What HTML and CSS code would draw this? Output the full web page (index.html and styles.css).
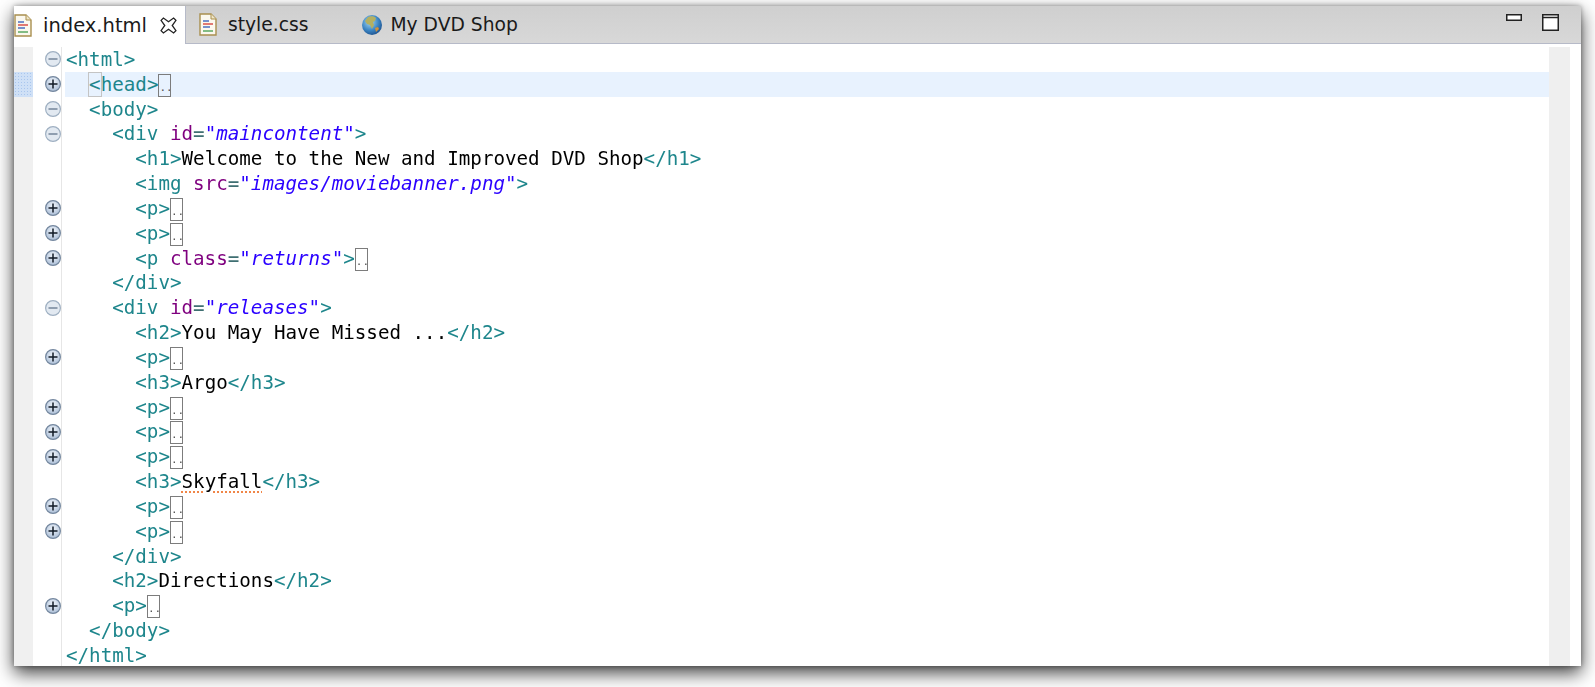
FILE: index.html
```html
<!DOCTYPE html>
<html lang="en">
<head>
<meta charset="utf-8">
<title>index.html</title>
<link rel="stylesheet" href="styles.css">
</head>
<body>
<svg class="defs" width="0" height="0" aria-hidden="true">
  <defs>
    <radialGradient id="knob" cx="50%" cy="35%" r="70%">
      <stop offset="0" stop-color="#f0f5fb"/>
      <stop offset="1" stop-color="#a6bad4"/>
    </radialGradient>
    <radialGradient id="earth" cx="40%" cy="35%" r="70%">
      <stop offset="0" stop-color="#a8d8f0"/>
      <stop offset="0.6" stop-color="#3c86c4"/>
      <stop offset="1" stop-color="#1c4f8c"/>
    </radialGradient>
    <symbol id="plus" viewBox="0 0 16 16">
      <circle cx="8" cy="8" r="7.400" fill="url(#knob)" stroke="#75889f" stroke-width="1.200"/>
      <path d="M3.500 8h9M8 3.500v9" stroke="#101a26" stroke-width="1.500"/>
    </symbol>
    <symbol id="minus" viewBox="0 0 16 16">
      <circle cx="8" cy="8" r="7.400" fill="#e2e9f1" stroke="#9fb0c2" stroke-width="1.200"/>
      <path d="M3.500 8h9" stroke="#73849a" stroke-width="1.500"/>
    </symbol>
    <symbol id="doc" viewBox="0 0 18 23">
      <path d="M1 1h11l5 5v16H1z" fill="#fbf8ee" stroke="#a98f4f" stroke-width="1.400"/>
      <path d="M12 1v5h5" fill="#efe6c8" stroke="#a98f4f"/>
      <path d="M4 8h6" stroke="#4a6fc0" stroke-width="1.500"/>
      <path d="M4 11h10" stroke="#d8504a" stroke-width="1.500"/>
      <path d="M4 14h7" stroke="#4a6fc0" stroke-width="1.500"/>
      <path d="M4 18h10" stroke="#5aa860" stroke-width="1.500"/>
    </symbol>
  </defs>
</svg>
<main class="window">
  <header class="tabbar">
    <div class="tab tab-active">
      <svg class="doc-icon"><use href="#doc"/></svg>
      <span class="tab-label">index.html</span>
      <svg class="close-icon" viewBox="0 0 16 16"><path d="M1 3.200 3.200 1 8 4.500 12.800 1 15 3.200 11.500 8 15 12.800 12.800 15 8 11.500 3.200 15 1 12.800 4.500 8z" fill="#fff" stroke="#222" stroke-width="1.200"/></svg>
    </div>
    <div class="tab tab-style">
      <svg class="doc-icon"><use href="#doc"/></svg>
      <span class="tab-label">style.css</span>
    </div>
    <div class="tab tab-shop">
      <svg class="globe-icon" viewBox="0 0 22 22">
        <circle cx="11" cy="11" r="10" fill="url(#earth)"/>
        <path d="M7 3c3-1 6-1 8 1l-1 3-2 1 1 3-2 4-2-4-3-1-2-3z" fill="#b4b060"/>
        <path d="M14 14l3-1 1 2-3 3z" fill="#d09038"/>
      </svg>
      <span class="tab-label">My DVD Shop</span>
    </div>
    <div class="controls">
      <svg class="min-icon" viewBox="0 0 16 7"><rect x="0.750" y="0.750" width="14.500" height="5.500" fill="#fff" stroke="#222" stroke-width="1.500"/></svg>
      <svg class="max-icon" viewBox="0 0 17 17"><rect x="0.750" y="0.750" width="15.500" height="15.500" fill="#fff" stroke="#222" stroke-width="1.500"/><path d="M1 3.500h15" stroke="#222" stroke-width="1.500"/></svg>
    </div>
  </header>
  <section class="editor">
    <div class="row"><div class="mark"></div><div class="fold"><svg class="knob"><use href="#minus"/></svg></div><div class="code"><span class="t">&lt;html&gt;</span></div><div class="rail"></div></div>
    <div class="row row-current"><div class="mark"></div><div class="fold"><svg class="knob"><use href="#plus"/></svg></div><div class="code">  <span class="t"><span class="match">&lt;</span>head&gt;</span><span class="more">..</span></div><div class="rail"></div></div>
    <div class="row"><div class="mark"></div><div class="fold"><svg class="knob"><use href="#minus"/></svg></div><div class="code">  <span class="t">&lt;body&gt;</span></div><div class="rail"></div></div>
    <div class="row"><div class="mark"></div><div class="fold"><svg class="knob"><use href="#minus"/></svg></div><div class="code">    <span class="t">&lt;div </span><span class="a">id</span><span class="e">=</span><span class="v">"maincontent"</span><span class="t">&gt;</span></div><div class="rail"></div></div>
    <div class="row"><div class="mark"></div><div class="fold"></div><div class="code">      <span class="t">&lt;h1&gt;</span>Welcome to the New and Improved DVD Shop<span class="t">&lt;/h1&gt;</span></div><div class="rail"></div></div>
    <div class="row"><div class="mark"></div><div class="fold"></div><div class="code">      <span class="t">&lt;img </span><span class="a">src</span><span class="e">=</span><span class="v">"images/moviebanner.png"</span><span class="t">&gt;</span></div><div class="rail"></div></div>
    <div class="row"><div class="mark"></div><div class="fold"><svg class="knob"><use href="#plus"/></svg></div><div class="code">      <span class="t">&lt;p&gt;</span><span class="more">..</span></div><div class="rail"></div></div>
    <div class="row"><div class="mark"></div><div class="fold"><svg class="knob"><use href="#plus"/></svg></div><div class="code">      <span class="t">&lt;p&gt;</span><span class="more">..</span></div><div class="rail"></div></div>
    <div class="row"><div class="mark"></div><div class="fold"><svg class="knob"><use href="#plus"/></svg></div><div class="code">      <span class="t">&lt;p </span><span class="a">class</span><span class="e">=</span><span class="v">"returns"</span><span class="t">&gt;</span><span class="more">..</span></div><div class="rail"></div></div>
    <div class="row"><div class="mark"></div><div class="fold"></div><div class="code">    <span class="t">&lt;/div&gt;</span></div><div class="rail"></div></div>
    <div class="row"><div class="mark"></div><div class="fold"><svg class="knob"><use href="#minus"/></svg></div><div class="code">    <span class="t">&lt;div </span><span class="a">id</span><span class="e">=</span><span class="v">"releases"</span><span class="t">&gt;</span></div><div class="rail"></div></div>
    <div class="row"><div class="mark"></div><div class="fold"></div><div class="code">      <span class="t">&lt;h2&gt;</span>You May Have Missed ...<span class="t">&lt;/h2&gt;</span></div><div class="rail"></div></div>
    <div class="row"><div class="mark"></div><div class="fold"><svg class="knob"><use href="#plus"/></svg></div><div class="code">      <span class="t">&lt;p&gt;</span><span class="more">..</span></div><div class="rail"></div></div>
    <div class="row"><div class="mark"></div><div class="fold"></div><div class="code">      <span class="t">&lt;h3&gt;</span>Argo<span class="t">&lt;/h3&gt;</span></div><div class="rail"></div></div>
    <div class="row"><div class="mark"></div><div class="fold"><svg class="knob"><use href="#plus"/></svg></div><div class="code">      <span class="t">&lt;p&gt;</span><span class="more">..</span></div><div class="rail"></div></div>
    <div class="row"><div class="mark"></div><div class="fold"><svg class="knob"><use href="#plus"/></svg></div><div class="code">      <span class="t">&lt;p&gt;</span><span class="more">..</span></div><div class="rail"></div></div>
    <div class="row"><div class="mark"></div><div class="fold"><svg class="knob"><use href="#plus"/></svg></div><div class="code">      <span class="t">&lt;p&gt;</span><span class="more">..</span></div><div class="rail"></div></div>
    <div class="row"><div class="mark"></div><div class="fold"></div><div class="code">      <span class="t">&lt;h3&gt;</span><span class="spell">Skyfall</span><span class="t">&lt;/h3&gt;</span></div><div class="rail"></div></div>
    <div class="row"><div class="mark"></div><div class="fold"><svg class="knob"><use href="#plus"/></svg></div><div class="code">      <span class="t">&lt;p&gt;</span><span class="more">..</span></div><div class="rail"></div></div>
    <div class="row"><div class="mark"></div><div class="fold"><svg class="knob"><use href="#plus"/></svg></div><div class="code">      <span class="t">&lt;p&gt;</span><span class="more">..</span></div><div class="rail"></div></div>
    <div class="row"><div class="mark"></div><div class="fold"></div><div class="code">    <span class="t">&lt;/div&gt;</span></div><div class="rail"></div></div>
    <div class="row"><div class="mark"></div><div class="fold"></div><div class="code">    <span class="t">&lt;h2&gt;</span>Directions<span class="t">&lt;/h2&gt;</span></div><div class="rail"></div></div>
    <div class="row"><div class="mark"></div><div class="fold"><svg class="knob"><use href="#plus"/></svg></div><div class="code">    <span class="t">&lt;p&gt;</span><span class="more">..</span></div><div class="rail"></div></div>
    <div class="row"><div class="mark"></div><div class="fold"></div><div class="code">  <span class="t">&lt;/body&gt;</span></div><div class="rail"></div></div>
    <div class="row"><div class="mark"></div><div class="fold"></div><div class="code"><span class="t">&lt;/html&gt;</span></div><div class="rail"></div></div>
  </section>
</main>
</body>
</html>
```
FILE: styles.css
```css
html, body {
  margin: 0;
  height: 100%;
  background: #fff;
  overflow: hidden;
}

body {
  padding: 6px 14px 0;
  box-sizing: border-box;
}

.defs {
  display: block;
  height: 0;
}

.window {
  height: 660px;
  display: flex;
  flex-direction: column;
  background: #fff;
  overflow: hidden;
  box-shadow: 0 7px 17px rgba(0, 0, 0, 0.75), 0 0 5px rgba(0, 0, 0, 0.35);
  filter: blur(0.55px);
}

.tabbar {
  flex: none;
  height: 37px;
  display: flex;
  align-items: stretch;
  background: linear-gradient(#cfcfcf, #d8d8d8);
  border-bottom: 1px solid #b6bac8;
}

.tab {
  display: flex;
  align-items: center;
  font: 18.700px "DejaVu Sans", sans-serif;
  color: #1a1a1a;
}

.tab-active {
  width: 172px;
  font-size: 19.500px;
  background: #fff;
  margin-bottom: -1px;
  border-right: 1px solid #b6bac8;
  box-sizing: border-box;
}

.tab-style {
  margin-left: 13px;
}

.tab-shop {
  margin-left: 52px;
}

.doc-icon {
  width: 18px;
  height: 23px;
  margin-right: 11px;
}

.close-icon {
  width: 17px;
  height: 17px;
  margin-left: 13px;
}

.globe-icon {
  width: 22px;
  height: 22px;
  margin-right: 8px;
}

.controls {
  margin-left: auto;
  padding: 8px 22px 0 0;
  display: flex;
  align-items: flex-start;
  gap: 20px;
}

.min-icon {
  width: 16px;
  height: 7px;
}

.max-icon {
  width: 17px;
  height: 17px;
}

.editor {
  flex: 1;
  padding-top: 3px;
  min-height: 0;
}

.row {
  display: flex;
  height: 24.830px;
}

.mark {
  flex: none;
  width: 19px;
  background: #f0f0f0;
}

.fold {
  flex: none;
  width: 28px;
  border-right: 1px solid #e6e6e6;
  display: flex;
  align-items: center;
  justify-content: flex-end;
}

.knob {
  width: 16px;
  height: 16px;
}

.code {
  flex: 1;
  margin-left: 3px;
  padding: 1px 0 0 1px;
  white-space: pre;
  font: 19.200px/24.830px "DejaVu Sans Mono", monospace;
  color: #000;
}

.rail {
  flex: none;
  width: 21px;
  margin-right: 11px;
  background: #efefef;
}

.row-current .mark {
  background-color: #cfe0f6;
  background-image: radial-gradient(#a9c6ee 1px, transparent 1px);
  background-size: 3px 3px;
}

.row-current .code {
  background: #e8f2fe;
}

.t {
  color: #1e868c;
}

.e {
  color: #3f6f72;
}

.a {
  color: #7f007f;
}

.v {
  color: #2a00ff;
  font-style: italic;
}

.match {
  box-shadow: 0 0 0 1px #c4c4c4;
}

.more {
  display: inline-block;
  width: 13px;
  height: 23px;
  box-sizing: border-box;
  border: 1.500px solid #7c7c7c;
  vertical-align: -6px;
  font: 11px/25px "DejaVu Sans Mono", monospace;
  text-align: center;
  color: #555;
  overflow: hidden;
}

.spell {
  text-decoration: underline dotted #f08648 2px;
  text-underline-offset: 3px;
}
```
